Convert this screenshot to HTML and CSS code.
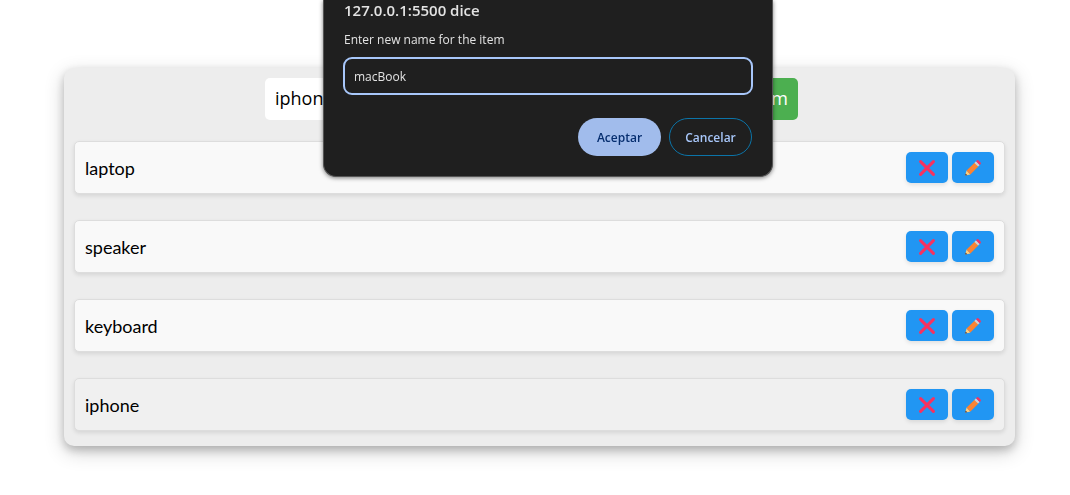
FILE: index.html
```html
<!DOCTYPE html>
<html lang="es">
<head>
<meta charset="utf-8">
<meta name="viewport" content="width=device-width, initial-scale=1">
<title>Items</title>
<link rel="stylesheet" href="styles.css">
</head>
<body>
<svg class="sprite" aria-hidden="true">
  <symbol id="cross" viewBox="0 0 16 16">
    <path d="M1.6 1.6L14.4 14.4M14.4 1.6L1.6 14.4" fill="none" stroke="#f8315f" stroke-width="3" stroke-linecap="round"/>
  </symbol>
  <symbol id="pencil" viewBox="0 0 16 16">
    <path d="M1.6 10.6L5.4 14.4L.6 15.5Q0 15.6 .2 15Z" fill="#ffce7c"/>
    <path d="M.5 13.6L2.4 15.3L.6 15.6Q0 15.7 .2 15Z" fill="#3f3b50"/>
    <path d="M9.6 2.7L13.3 6.4L5.4 14.4L1.6 10.6Z" fill="#ff822d"/>
    <path d="M10.8 3.9L12 5.1L4.1 13.1L2.9 11.9Z" fill="#f3873f"/>
    <path d="M11 1.3L14.7 5L13.1 6.6L9.4 2.9Z" fill="#d3d3d3"/>
    <path d="M11 1.3L11.8.5Q12.7-.3 13.6.5L15.5 2.4Q16.3 3.3 15.5 4.2L14.7 5Z" fill="#f8315f"/>
  </symbol>
</svg>
<main class="card">
  <form class="add-form">
    <input class="add-input" type="text" value="iphone" aria-label="Item">
    <button class="add-button" type="button">Add Item</button>
  </form>
  <ul class="items">
    <li class="item"><span>laptop</span>
      <div class="actions">
        <button class="action" type="button" aria-label="Delete laptop"><svg class="icon"><use href="#cross"/></svg></button>
        <button class="action" type="button" aria-label="Edit laptop"><svg class="icon"><use href="#pencil"/></svg></button>
      </div>
    </li>
    <li class="item"><span>speaker</span>
      <div class="actions">
        <button class="action" type="button" aria-label="Delete speaker"><svg class="icon"><use href="#cross"/></svg></button>
        <button class="action" type="button" aria-label="Edit speaker"><svg class="icon"><use href="#pencil"/></svg></button>
      </div>
    </li>
    <li class="item"><span>keyboard</span>
      <div class="actions">
        <button class="action" type="button" aria-label="Delete keyboard"><svg class="icon"><use href="#cross"/></svg></button>
        <button class="action" type="button" aria-label="Edit keyboard"><svg class="icon"><use href="#pencil"/></svg></button>
      </div>
    </li>
    <li class="item item-active"><span>iphone</span>
      <div class="actions">
        <button class="action" type="button" aria-label="Delete iphone"><svg class="icon"><use href="#cross"/></svg></button>
        <button class="action" type="button" aria-label="Edit iphone"><svg class="icon"><use href="#pencil"/></svg></button>
      </div>
    </li>
  </ul>
</main>
<form class="prompt" role="dialog" aria-labelledby="prompt-title">
  <h1 class="prompt-title" id="prompt-title">127.0.0.1:5500 dice</h1>
  <label class="prompt-label" for="new-name">Enter new name for the item</label>
  <input class="prompt-input" id="new-name" type="text" value="macBook">
  <div class="prompt-buttons">
    <button class="prompt-button prompt-accept" type="button">Aceptar</button>
    <button class="prompt-button prompt-cancel" type="button">Cancelar</button>
  </div>
</form>
</body>
</html>
```
FILE: styles.css
```css
* {
  box-sizing: border-box;
}

body {
  min-height: 100vh;
  margin: 0;
  padding: 68px 55px 40px 64px;
  background: #fff;
  font-family: Lato, sans-serif;
}

.sprite {
  position: absolute;
  width: 0;
  height: 0;
}

.card {
  padding: 10px 10px 15px;
  border-radius: 10px;
  background: #ededed;
  box-shadow: 0 4px 8px rgba(0, 0, 0, 0.2), 0 6px 20px rgba(0, 0, 0, 0.19);
}

.add-form {
  display: flex;
  justify-content: center;
  gap: 10px;
  padding-right: 16px;
  margin-bottom: 21px;
}

.add-input,
.add-button {
  height: 42px;
  padding: 0 10px 2px;
  border: 0;
  border-radius: 5px;
  font: 18px "Open Sans", sans-serif;
}

.add-input {
  width: 423px;
  background: #fff;
  color: #000;
}

.add-button {
  width: 100px;
  background: #4caf50;
  color: #fff;
  text-align: right;
}

.items {
  display: flex;
  flex-direction: column;
  gap: 26px;
  margin: 0;
  padding: 0;
  list-style: none;
}

.item {
  display: flex;
  align-items: center;
  justify-content: space-between;
  padding: 10px;
  border: 1px solid #ddd;
  border-radius: 5px;
  background: #f9f9f9;
  box-shadow: 0 2px 4px rgba(0, 0, 0, 0.1);
  font-size: 18px;
  color: #000;
}

.item-active {
  background: #f0f0f0;
}

.actions {
  display: flex;
  gap: 4px;
}

.action {
  display: grid;
  place-items: center;
  width: 42px;
  height: 31px;
  padding: 0;
  border: 0;
  border-radius: 5px;
  background: #2196f3;
  box-shadow: 0 2px 4px rgba(0, 0, 0, 0.1);
}

.icon {
  width: 16px;
  height: 16px;
}

.prompt {
  position: fixed;
  top: 0;
  left: 323px;
  width: 450px;
  padding: 0 20px 20px;
  border: 1px solid #555;
  border-top: 0;
  border-radius: 0 0 13px 13px;
  background: #1f1f1f;
  box-shadow: 0 1px 4px rgba(0, 0, 0, 0.5);
  color: #e3e3e3;
  font-family: "Open Sans", sans-serif;
}

.prompt-title {
  margin: 0 0 10px;
  font-size: 15px;
  font-weight: 600;
  line-height: 20px;
}

.prompt-label {
  display: block;
  margin-bottom: 8px;
  font-size: 12px;
  line-height: 20px;
}

.prompt-input {
  display: block;
  width: 100%;
  height: 36px;
  padding: 0 10px;
  border: 0;
  border-radius: 8px;
  outline: 2px solid #a8c7fa;
  outline-offset: -1px;
  background: transparent;
  color: #e3e3e3;
  font: 12px "Open Sans", sans-serif;
}

.prompt-buttons {
  display: flex;
  justify-content: flex-end;
  gap: 8px;
  margin-top: 24px;
}

.prompt-button {
  width: 83px;
  height: 38px;
  padding: 0;
  border: 0;
  border-radius: 19px;
  font: 600 12px "Open Sans", sans-serif;
}

.prompt-accept {
  background: #a1bcec;
  color: #062e6f;
}

.prompt-cancel {
  border: 1px solid #0b74a8;
  background: transparent;
  color: #a8c7fa;
}
```
